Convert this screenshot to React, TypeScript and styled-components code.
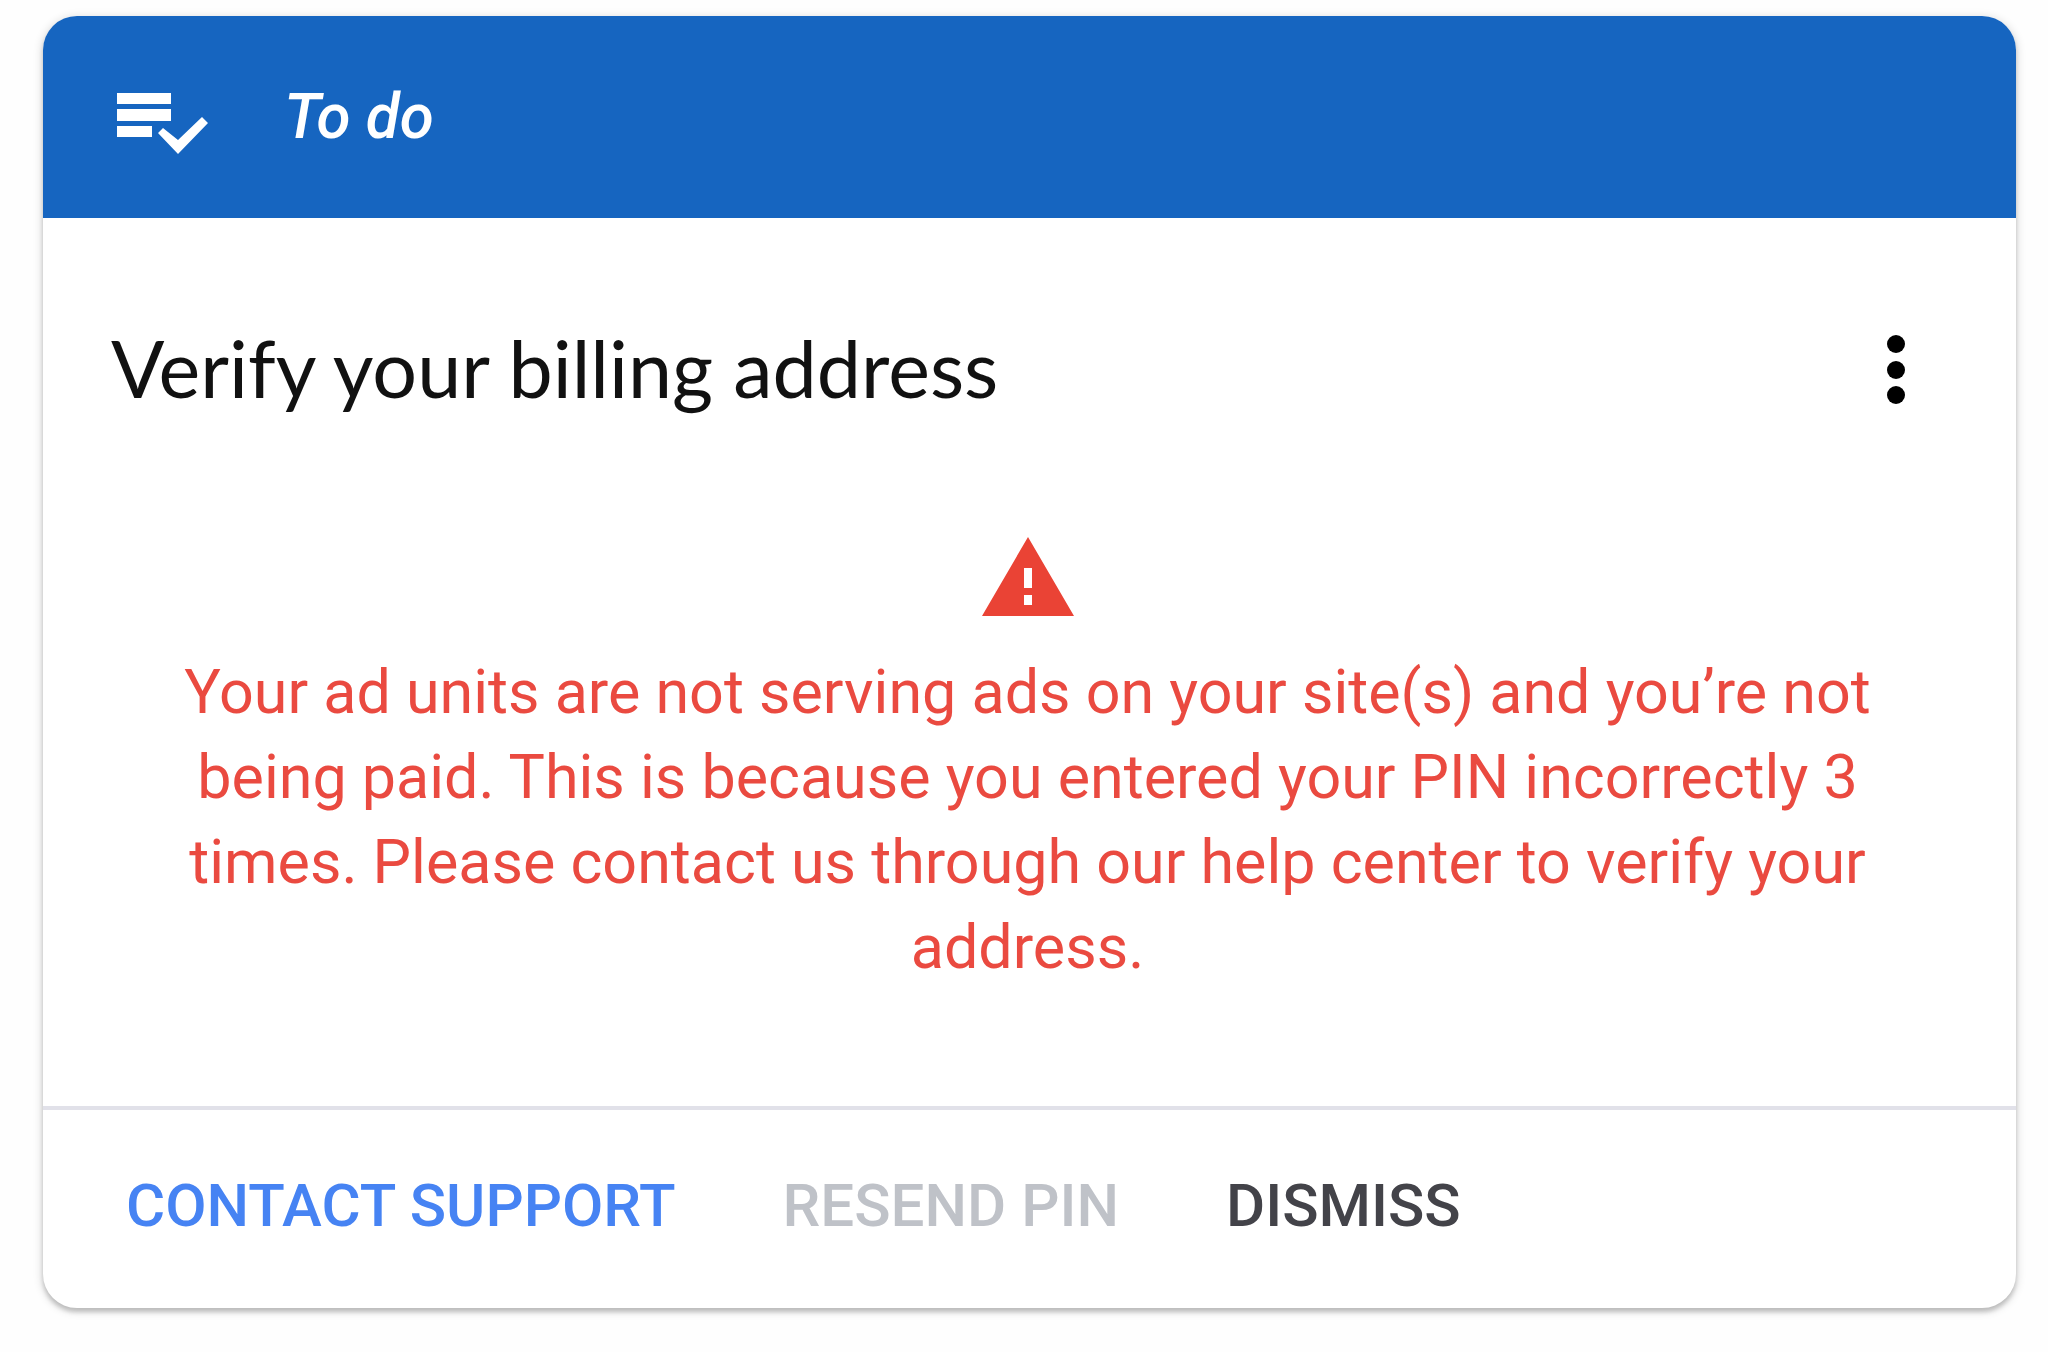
import React from 'react';
import styled, { createGlobalStyle } from 'styled-components';

const GlobalStyle = createGlobalStyle`
  * { box-sizing: border-box; }
  body {
    margin: 0;
    background: #fefefe;
    font-family: Roboto, "Liberation Sans", sans-serif;
  }
`;

const Page = styled.main`
  padding: 16px 32px 44px 43px;
`;

const Card = styled.article`
  background: #fff;
  border-radius: 34px;
  box-shadow: 0 4px 4px rgba(0, 0, 0, 0.18), 0 2px 8px 2px rgba(0, 0, 0, 0.12);
`;

const CardHeader = styled.header`
  display: flex;
  align-items: center;
  gap: 75px;
  padding: 51px 72px;
  border-radius: 34px 34px 0 0;
  background: #1665c0;
  color: #fff;
`;

const HeaderLabel = styled.span`
  font: italic 500 62px/100px Roboto, sans-serif;
`;

const TitleRow = styled.div`
  display: flex;
  align-items: center;
  justify-content: space-between;
  padding: 98px 80px 0 68px;
`;

const Title = styled.h2`
  margin: 0;
  font: 400 79px/104px Lato, sans-serif;
  color: #111;
`;

const MenuButton = styled.button`
  display: flex;
  padding: 0;
  border: 0;
  background: none;
  color: #000;
  cursor: pointer;
`;

const Alert = styled.section`
  display: flex;
  flex-direction: column;
  align-items: center;
  gap: 34px;
  padding: 117px 120px 116px 116px;
  color: #ea4335;
`;

const Message = styled.p`
  margin: 0;
  font-size: 61px;
  line-height: 85px;
  text-align: center;
  color: #ea4a40;
`;

const Actions = styled.footer`
  display: flex;
  gap: 107px;
  padding: 54px 83px 60px;
  border-top: 4px solid #e1e1e9;
`;

const Action = styled.button<{ $color: string }>`
  padding: 0;
  border: 0;
  background: none;
  font: 500 60px/84px Roboto, sans-serif;
  text-transform: uppercase;
  color: ${({ $color }) => $color};
  cursor: ${({ disabled }) => (disabled ? 'default' : 'pointer')};
`;

const ChecklistIcon = () => (
  <svg width="94" height="74" viewBox="0 0 94 74" fill="currentColor" aria-hidden="true">
    <path d="M2 13h54v11H2zM2 29h54v12H2zM2 46h35v11H2z" />
    <path d="M43 53l5-5 15 12 24-23 6 6-30 31z" />
  </svg>
);

const MoreIcon = () => (
  <svg width="80" height="80" viewBox="0 0 80 80" fill="currentColor" aria-hidden="true">
    <circle cx="40" cy="16" r="9" />
    <circle cx="40" cy="42" r="9" />
    <circle cx="40" cy="67" r="9" />
  </svg>
);

const WarningIcon = () => (
  <svg width="92" height="79" viewBox="0 0 92 79" fill="currentColor" role="img" aria-label="Warning">
    <path fillRule="evenodd" d="M46 0l46 79H0zM42 31v20h8V31zM42 58v10h8V58z" />
  </svg>
);

export default function App() {
  return (
    <>
      <GlobalStyle />
      <Page>
        <Card>
          <CardHeader>
            <ChecklistIcon />
            <HeaderLabel>To do</HeaderLabel>
          </CardHeader>
          <TitleRow>
            <Title>Verify your billing address</Title>
            <MenuButton type="button" aria-label="More options">
              <MoreIcon />
            </MenuButton>
          </TitleRow>
          <Alert>
            <WarningIcon />
            <Message>
              Your ad units are not serving ads on your site(s) and you’re not being paid. This is
              because you entered your PIN incorrectly 3 times. Please contact us through our help
              center to verify your address.
            </Message>
          </Alert>
          <Actions>
            <Action type="button" $color="#4683f3">Contact support</Action>
            <Action type="button" $color="#bfc2c8" disabled>Resend PIN</Action>
            <Action type="button" $color="#434349">Dismiss</Action>
          </Actions>
        </Card>
      </Page>
    </>
  );
}
